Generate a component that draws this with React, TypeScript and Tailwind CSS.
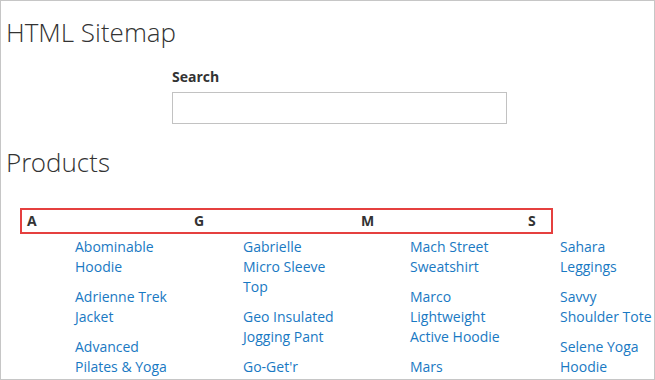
import React from 'react';

const letters = ['A', 'G', 'M', 'S'];

const columns = [
  { ml: 'ml-[74px]', items: ['Abominable Hoodie', 'Adrienne Trek Jacket', 'Advanced Pilates & Yoga'] },
  { ml: 'ml-[72px]', items: ['Gabrielle Micro Sleeve Top', 'Geo Insulated Jogging Pant', "Go-Get'r"] },
  { ml: 'ml-[71px]', items: ['Mach Street Sweatshirt', 'Marco Lightweight Active Hoodie', 'Mars'] },
  { ml: 'ml-[54px]', items: ['Sahara Leggings', 'Savvy Shoulder Tote', 'Selene Yoga Hoodie'] },
];

export default function App() {
  return (
    <div
      className="w-[655px] h-[380px] overflow-hidden bg-white border border-[#c6c6c6] text-[#333333]"
      style={{ fontFamily: '"Open Sans", "Liberation Sans", sans-serif' }}
    >
      <h1 className="ml-[5px] mt-[15px] text-[26px] leading-[32px] font-light font-['Open_Sans_Light','Open_Sans',sans-serif]">
        HTML Sitemap
      </h1>

      <div className="ml-[171px] mt-[19px]">
        <label className="block text-sm leading-5 font-bold">Search</label>
        <input
          type="text"
          className="block mt-[5px] w-[335px] h-[32px] border border-[#c2c2c2] bg-white outline-none"
        />
      </div>

      <h2 className="ml-[5px] mt-[22px] text-[26px] leading-[32px] font-light font-['Open_Sans_Light','Open_Sans',sans-serif]">
        Products
      </h2>

      <div className="ml-[19px] mt-[30px] w-[533px] h-[26px] border-2 border-[#e5403f] flex pl-[5px] pt-px">
        {letters.map((l) => (
          <div key={l} className="w-[167px] shrink-0 text-sm leading-5 font-bold">
            {l}
          </div>
        ))}
      </div>

      <div className="flex mt-[3px]">
        {columns.map((col, i) => (
          <ul key={i} className={`${col.ml} w-[96px] shrink-0`}>
            {col.items.map((item) => (
              <li key={item} className="mb-[10px] text-sm leading-5">
                <a href="#" className="text-[#1979c3]">
                  {item}
                </a>
              </li>
            ))}
          </ul>
        ))}
      </div>
    </div>
  );
}
